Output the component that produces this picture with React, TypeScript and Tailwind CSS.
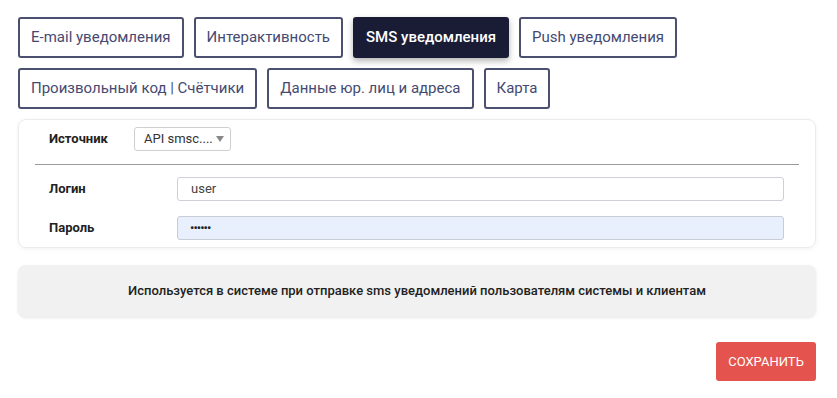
import React from 'react';

const tabsTop = ['E-mail уведомления', 'Интерактивность', 'SMS уведомления', 'Push уведомления'];
const tabsBottom = ['Произвольный код | Счётчики', 'Данные юр. лиц и адреса', 'Карта'];

function Tab({ label, active }: { label: string; active?: boolean }) {
  return (
    <button
      className={
        active
          ? 'h-[41px] px-[11px] rounded-[3px] border-2 border-[#1a1c36] bg-[#1a1c36] text-white font-medium text-[15px] shadow-[0_3px_6px_rgba(0,0,0,0.3)]'
          : 'h-[41px] px-[11px] rounded-[3px] border-2 border-[#4b4f70] bg-white text-[#454a72] text-[15px]'
      }
    >
      {label}
    </button>
  );
}

export default function App() {
  return (
    <div className="w-[837px] h-[398px] bg-white font-['Roboto',sans-serif] pt-[17px] pl-[18px]">
      <div className="w-[798px]">
        <div className="flex gap-[10px]">
          {tabsTop.map((t) => (
            <Tab key={t} label={t} active={t === 'SMS уведомления'} />
          ))}
        </div>
        <div className="flex gap-[10px] mt-[10px]">
          {tabsBottom.map((t) => (
            <Tab key={t} label={t} />
          ))}
        </div>

        {/* settings card */}
        <div className="mt-[10px] h-[129px] rounded-[8px] border border-[#ebebeb] shadow-[0_1px_4px_rgba(0,0,0,0.06)] pt-[7px] px-[16px]">
          <div className="flex items-center h-[24px] pl-[14px]">
            <span className="w-[85px] text-[13px] font-bold text-[#222]">Источник</span>
            <div className="h-[24px] w-[97px] rounded-[3px] border border-[#cfcfcf] flex items-center pl-[9px] pr-[6px] justify-between">
              <span className="text-[13px] text-[#333]">API smsc....</span>
              <span className="w-0 h-0 border-l-[4px] border-r-[4px] border-t-[6px] border-l-transparent border-r-transparent border-t-[#888]" />
            </div>
          </div>
          <div className="mt-[13px] h-px bg-[#9a9a9a]" />
          <div className="mt-[12px] flex items-center h-[24px] pl-[14px]">
            <span className="w-[128px] text-[13px] font-bold text-[#222]">Логин</span>
            <div className="h-[24px] w-[607px] rounded-[3px] border border-[#cdd0d6] flex items-center pl-[13px] text-[13px] text-[#444]">
              user
            </div>
          </div>
          <div className="mt-[15px] flex items-center h-[24px] pl-[14px]">
            <span className="w-[128px] text-[13px] font-bold text-[#222]">Пароль</span>
            <div className="h-[24px] w-[607px] rounded-[3px] border border-[#c8ccd4] bg-[#e8f0fe] flex items-center pl-[12px] text-[13px] text-[#222] tracking-[-1px]">
              ••••••
            </div>
          </div>
        </div>

        {/* info */}
        <div className="mt-[17px] h-[52px] rounded-[8px] bg-[#f1f1f1] shadow-[0_1px_3px_rgba(0,0,0,0.1)] flex items-center justify-center">
          <span className="text-[13px] font-medium text-[#222]">
            Используется в системе при отправке sms уведомлений пользователям системы и клиентам
          </span>
        </div>

        <div className="mt-[25px] flex justify-end">
          <button className="h-[39px] w-[100px] rounded-[3px] bg-[#e5534e] text-white text-[13px]">
            СОХРАНИТЬ
          </button>
        </div>
      </div>
    </div>
  );
}
